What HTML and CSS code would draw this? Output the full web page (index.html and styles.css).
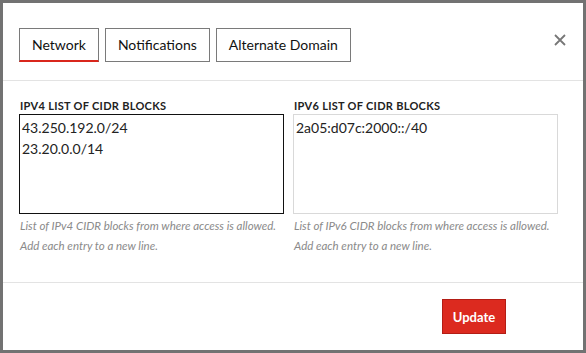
FILE: index.html
```html
<!DOCTYPE html>
<html>
<head>
<meta charset="utf-8">
<link rel="stylesheet" href="styles.css">
</head>
<body>
<div class="modal">
  <div class="header">
    <div class="tabs">
      <button class="tab active">Network</button>
      <button class="tab">Notifications</button>
      <button class="tab">Alternate Domain</button>
    </div>
    <button class="close" aria-label="Close">
      <svg width="12" height="12" viewBox="0 0 12 12"><path d="M1 1L11 11M11 1L1 11" stroke="#777" stroke-width="1.8" fill="none"/></svg>
    </button>
  </div>
  <div class="body">
    <div class="field">
      <label class="label">IPV4 LIST OF CIDR BLOCKS</label>
      <div class="area focused">43.250.192.0/24<br>23.20.0.0/14</div>
      <p class="help">List of IPv4 CIDR blocks from where access is allowed.<br>Add each entry to a new line.</p>
    </div>
    <div class="field">
      <label class="label">IPV6 LIST OF CIDR BLOCKS</label>
      <div class="area">2a05:d07c:2000::/40</div>
      <p class="help">List of IPv6 CIDR blocks from where access is allowed.<br>Add each entry to a new line.</p>
    </div>
  </div>
  <div class="footer">
    <button class="update">Update</button>
  </div>
</div>
</body>
</html>
```
FILE: styles.css
```css
* { box-sizing: border-box; }
html, body { margin: 0; padding: 0; }
body {
  background: #727272;
  padding: 3px;
  height: 353px;
  font-family: Lato, "Open Sans", sans-serif;
  color: #222;
}
.modal {
  background: #fff;
  height: 347px;
  display: flex;
  flex-direction: column;
}
.header {
  height: 78px;
  border-bottom: 1px solid #e3e3e3;
  display: flex;
  justify-content: space-between;
  align-items: flex-start;
  padding: 25px 0 0 16px;
}
.tabs { display: flex; gap: 6px; }
.tab {
  font-family: Lato, sans-serif;
  font-size: 14px;
  color: #111;
  background: #fff;
  border: 1px solid #7a7a7a;
  height: 34px;
  padding: 0 12px;
  margin: 0;
  line-height: 32px;
}
.tab.active {
  border-bottom: 2px solid #d9261c;
}
.close {
  background: none;
  border: 0;
  padding: 0;
  margin: 6px 17px 0 0;
  width: 12px;
  height: 12px;
  display: flex;
}
.body {
  height: 202px;
  border-bottom: 1px solid #e3e3e3;
  display: grid;
  grid-template-columns: 265px 265px;
  column-gap: 9px;
  padding: 18px 0 0 16px;
}
.field { display: flex; flex-direction: column; }
.label {
  font-size: 11px;
  font-weight: 700;
  line-height: 14px;
  color: #222;
  letter-spacing: 0.3px;
  padding-left: 1px;
}
.area {
  margin-top: 1px;
  height: 100px;
  border: 1px solid #d9d9d9;
  font-size: 14px;
  line-height: 21px;
  padding: 2px 2px;
  color: #222;
}
.area.focused { border-color: #111; }
.help {
  margin: 2px 0 0 1px;
  font-size: 11.5px;
  font-style: italic;
  line-height: 20px;
  color: #8a8a8a;
}
.footer {
  flex: 1;
  display: flex;
  justify-content: flex-end;
  align-items: flex-start;
  padding: 16px 77px 0 0;
}
.update {
  font-family: Lato, sans-serif;
  font-size: 13px;
  font-weight: 700;
  color: #fff;
  background: #dc2a1f;
  border: 1px solid #b31d15;
  height: 35px;
  width: 64px;
  padding: 0;
}
```
